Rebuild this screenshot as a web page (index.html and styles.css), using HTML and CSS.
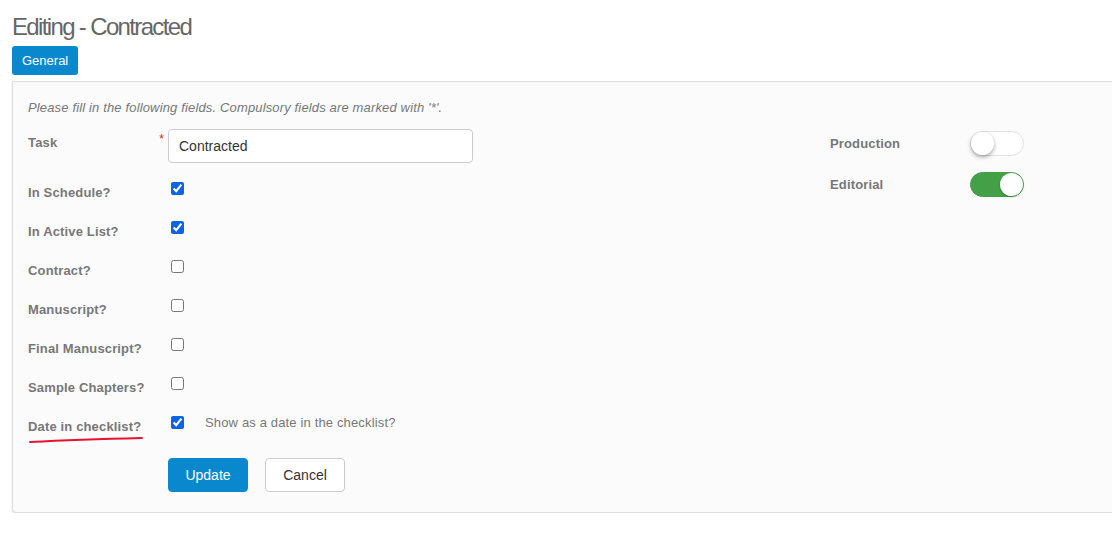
FILE: index.html
```html
<!DOCTYPE html>
<html>
<head>
<meta charset="utf-8">
<link rel="stylesheet" href="styles.css">
</head>
<body>
<div class="page">
  <h1 class="title">Editing - Contracted</h1>
  <div class="tabs"><button class="tab">General</button></div>
  <div class="panel">
    <p class="intro">Please fill in the following fields. Compulsory fields are marked with '*'.</p>
    <div class="cols">
      <div class="form">
        <div class="row row-task">
          <div class="label">Task<span class="req">*</span></div>
          <div class="control"><input class="text" type="text" value="Contracted"></div>
        </div>
        <div class="row row-check">
          <div class="label">In Schedule?</div>
          <div class="control"><input type="checkbox" class="cb" checked></div>
        </div>
        <div class="row row-check">
          <div class="label">In Active List?</div>
          <div class="control"><input type="checkbox" class="cb" checked></div>
        </div>
        <div class="row row-check">
          <div class="label">Contract?</div>
          <div class="control"><input type="checkbox" class="cb"></div>
        </div>
        <div class="row row-check">
          <div class="label">Manuscript?</div>
          <div class="control"><input type="checkbox" class="cb"></div>
        </div>
        <div class="row row-check">
          <div class="label">Final Manuscript?</div>
          <div class="control"><input type="checkbox" class="cb"></div>
        </div>
        <div class="row row-check">
          <div class="label">Sample Chapters?</div>
          <div class="control"><input type="checkbox" class="cb"></div>
        </div>
        <div class="row row-check">
          <div class="label label-marked">Date in checklist?
            <svg class="scribble" width="116" height="8" viewBox="0 0 116 8"><path d="M2 6 Q 50 3.5 114 2" stroke="#e5132f" stroke-width="1.8" fill="none" stroke-linecap="round"/></svg>
          </div>
          <div class="control"><input type="checkbox" class="cb" checked><span class="help">Show as a date in the checklist?</span></div>
        </div>
        <div class="actions">
          <button class="btn btn-primary">Update</button>
          <button class="btn btn-default">Cancel</button>
        </div>
      </div>
      <div class="side">
        <div class="srow">
          <div class="slabel">Production</div>
          <span class="toggle"><span class="knob"></span></span>
        </div>
        <div class="srow">
          <div class="slabel">Editorial</div>
          <span class="toggle on"><span class="knob"></span></span>
        </div>
      </div>
    </div>
  </div>
</div>
</body>
</html>
```
FILE: styles.css
```css
html, body {
  margin: 0;
  padding: 0;
  background: #ffffff;
  font-family: "Liberation Sans", Arial, sans-serif;
  overflow: hidden;
}
.page {
  padding: 13px 0 0 12px;
}
.title {
  margin: 0;
  font-size: 24px;
  line-height: 28px;
  font-weight: normal;
  color: #666;
  letter-spacing: -1.65px;
}
.tabs {
  margin-top: 5px;
  display: flex;
}
.tab {
  height: 29px;
  padding: 0 10px;
  border: none;
  border-radius: 3px;
  background: #0a88cd;
  color: #fff;
  font-family: "Liberation Sans", Arial, sans-serif;
  font-size: 13px;
}
.panel {
  margin-top: 6px;
  margin-right: -10px;
  background: #fbfbfb;
  border: 1px solid #ddd;
  border-radius: 0 0 4px 4px;
  box-shadow: 0 1px 2px rgba(0,0,0,0.12);
  padding: 18px 0 20px 15px;
}
.intro {
  margin: 0 0 13px 0;
  font-size: 13px;
  line-height: 16px;
  font-style: italic;
  color: #777;
  letter-spacing: 0.15px;
}
.cols {
  display: grid;
  grid-template-columns: 802px auto;
}
.row {
  display: flex;
}
.label {
  width: 140px;
  flex: none;
  font-size: 13px;
  line-height: 16px;
  font-weight: bold;
  color: #777;
  letter-spacing: 0.15px;
  box-sizing: border-box;
  position: relative;
}
.row-task {
  height: 46px;
}
.row-task .label {
  padding-top: 6px;
  display: flex;
  justify-content: space-between;
}
.req {
  color: #e02020;
  font-weight: normal;
  font-size: 12px;
  line-height: 12px;
  margin-right: 4px;
  margin-top: -2px;
}
.text {
  width: 305px;
  height: 34px;
  box-sizing: border-box;
  border: 1px solid #ccc;
  border-radius: 4px;
  background: #fff;
  padding: 0 10px;
  font-family: "Liberation Sans", Arial, sans-serif;
  font-size: 14px;
  color: #333;
  margin: 0;
}
.row-check {
  height: 39px;
}
.row-check .label {
  padding-top: 10px;
}
.control {
  display: flex;
  align-items: flex-start;
}
.cb {
  width: 13px;
  height: 13px;
  margin: 7px 0 0 3px;
  accent-color: #0b63e6;
}
.help {
  margin-left: 21px;
  margin-top: 6px;
  font-size: 13px;
  line-height: 16px;
  color: #777;
  letter-spacing: 0.15px;
}
.scribble {
  position: absolute;
  left: 0;
  top: 27px;
}
.actions {
  display: flex;
  gap: 17px;
  margin: 10px 0 0 140px;
}
.btn {
  width: 80px;
  height: 34px;
  border-radius: 4px;
  font-family: "Liberation Sans", Arial, sans-serif;
  font-size: 14px;
  box-sizing: border-box;
}
.btn-primary {
  background: #0a88cd;
  border: 1px solid #0a88cd;
  color: #fff;
}
.btn-default {
  background: #fff;
  border: 1px solid #ccc;
  color: #333;
}
.side {
  padding-top: 2px;
  display: flex;
  flex-direction: column;
  gap: 16px;
}
.srow {
  display: flex;
  align-items: center;
  height: 25px;
}
.slabel {
  width: 140px;
  font-size: 13px;
  font-weight: bold;
  color: #777;
  letter-spacing: 0.15px;
}
.toggle {
  position: relative;
  width: 54px;
  height: 25px;
  box-sizing: border-box;
  border-radius: 13px;
  border: 1px solid #e2e2e2;
  background: #fff;
}
.toggle .knob {
  position: absolute;
  top: 0;
  left: 0;
  width: 23px;
  height: 23px;
  border-radius: 50%;
  background: #fff;
  box-shadow: 0 2px 4px rgba(0,0,0,0.35);
}
.toggle.on {
  background: #43a047;
  border-color: #43a047;
}
.toggle.on .knob {
  left: auto;
  right: 0;
  box-shadow: 0 1px 2px rgba(0,0,0,0.25);
}
```
